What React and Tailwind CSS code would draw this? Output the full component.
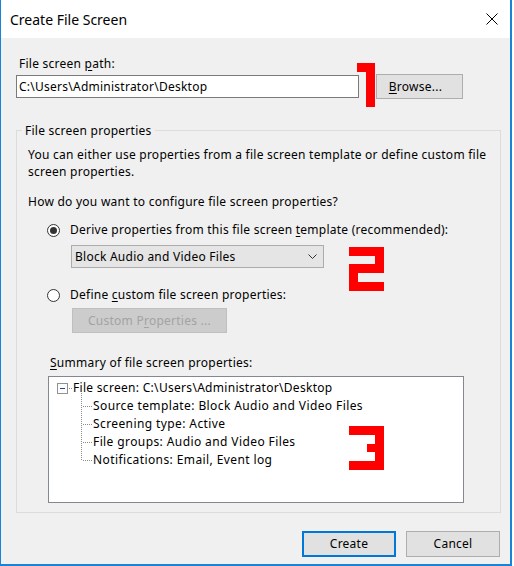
import React from 'react';

const Radio = ({ checked }) => (
  <span className="mt-[3px] flex h-[13px] w-[13px] shrink-0 items-center justify-center rounded-full border border-[#333333] bg-white">
    {checked && <span className="h-[7px] w-[7px] rounded-full bg-[#333333]" />}
  </span>
);

const Branch = ({ first, last }) => (
  <svg width="18" height="18" className="shrink-0 overflow-visible">
    <line x1="6.5" y1={first ? -4 : 0} x2="6.5" y2={last ? 10 : 18} stroke="#8c8c8c" strokeDasharray="1 1" />
    <line x1="8" y1="9.5" x2="17" y2="9.5" stroke="#8c8c8c" strokeDasharray="1 1" />
  </svg>
);

// red annotation digits drawn over the dialog
const Mark = ({ left, top, w, rects }) => (
  <svg className="absolute" style={{ left, top }} width={w} height="44">
    {rects.map(([x, y, rw, rh], i) => (
      <rect key={i} x={x} y={y} width={rw} height={rh} fill="#ff0000" />
    ))}
  </svg>
);

const children = [
  'Source template: Block Audio and Video Files',
  'Screening type: Active',
  'File groups: Audio and Video Files',
  'Notifications: Email, Event log',
];

export default function App() {
  return (
    <div className="relative h-[566px] w-[514px] bg-white font-['Noto_Sans',sans-serif] text-[12px] leading-[17px] tracking-[0.25px] text-black">
      <div className="flex h-[566px] w-[512px] flex-col border-b-2 border-l border-r-2 border-[#1883d7] bg-[#f0f0f0]">
        {/* title bar */}
        <div className="flex h-[38px] shrink-0 justify-between bg-white pl-[9px] pr-[12px] pt-[10px]">
          <span className="text-[14px] leading-[20px] tracking-normal">Create File Screen</span>
          <svg width="12" height="12" className="mt-[3px]">
            <path d="M0.5 0.5 L11.5 11.5 M11.5 0.5 L0.5 11.5" stroke="#000" strokeWidth="1" />
          </svg>
        </div>

        <div className="flex flex-col pl-[15px] pr-[10px] pt-[17px]">
          <div className="pl-[3px]">
            File screen <u className="underline-offset-2">p</u>ath:
          </div>
          <div className="mt-[2px] flex items-start">
            <div className="mt-[1px] h-[23px] w-[343px] border border-[#7a7a7a] bg-white pl-[2px] leading-[21px]">
              C:\Users\Administrator\Desktop
            </div>
            <button className="ml-[17px] h-[25px] w-[87px] border border-[#adadad] bg-[#e1e1e1] pr-[8px] leading-[23px]">
              <u className="underline-offset-2">B</u>rowse...
            </button>
          </div>

          <fieldset className="mt-[23px] w-[485px] border border-[#dcdcdc]">
            <legend className="ml-[5px] px-[3px] leading-[17px]">File screen properties</legend>
            <div className="flex flex-col pb-[9px] pt-[7px]">
              <p className="pl-[11px] pr-[8px]">
                You can either use properties from a file screen template or define custom file screen properties.
              </p>
              <div className="mt-[13px] pl-[11px]">How do you want to configure file screen properties?</div>

              <div className="mt-[11px] flex items-start gap-[10px] pl-[30px]">
                <Radio checked />
                <span>
                  Derive properties from this file screen <u className="underline-offset-2">t</u>emplate (recommended):
                </span>
              </div>
              <div className="ml-[54px] mt-[7px] flex h-[23px] w-[253px] items-center justify-between border border-[#acacac] bg-[#e5e5e5] pl-[3px] pr-[6px] leading-[21px]">
                <span>Block Audio and Video Files</span>
                <svg width="9" height="6">
                  <path d="M0.5 0.5 L4.5 4.5 L8.5 0.5" fill="none" stroke="#333" strokeWidth="1" />
                </svg>
              </div>

              <div className="mt-[18px] flex items-start gap-[10px] pl-[30px]">
                <Radio />
                <span>
                  Define <u className="underline-offset-2">c</u>ustom file screen properties:
                </span>
              </div>
              <button className="ml-[55px] mt-[5px] h-[25px] w-[155px] border border-[#bfbfbf] bg-[#cccccc] leading-[23px] text-[#a3a3a3]">
                Custom P<u className="underline-offset-2">r</u>operties ...
              </button>

              <div className="ml-[33px] mt-[21px]">
                <u className="underline-offset-2">S</u>ummary of file screen properties:
              </div>
              <div className="ml-[31px] mt-[5px] h-[127px] w-[416px] border border-[#828790] bg-white pt-[2px] leading-[18px] tracking-[0.4px]">
                <div className="flex h-[18px] items-start pl-[8px]">
                  <svg width="16" height="11" className="mt-[4px] shrink-0">
                    <rect x="0.5" y="0.5" width="10" height="10" fill="#fcfcfc" stroke="#919191" />
                    <line x1="3" y1="5.5" x2="8" y2="5.5" stroke="#1e4a86" />
                    <line x1="12" y1="5.5" x2="16" y2="5.5" stroke="#8c8c8c" strokeDasharray="1 1" />
                  </svg>
                  <span className="tracking-[0.3px]">File screen: C:\Users\Administrator\Desktop</span>
                </div>
                {children.map((t, i) => (
                  <div key={t} className="flex h-[18px] items-start pl-[26px]">
                    <Branch first={i === 0} last={i === children.length - 1} />
                    <span>{t}</span>
                  </div>
                ))}
              </div>
            </div>
          </fieldset>

          <div className="mt-[18px] flex justify-end gap-[10px]">
            <button className="h-[26px] w-[94px] border-2 border-[#0078d7] bg-[#e1e1e1] leading-[22px]">Create</button>
            <button className="h-[26px] w-[94px] border border-[#adadad] bg-[#e1e1e1] leading-[24px]">Cancel</button>
          </div>
        </div>
      </div>

      <Mark left={357} top={63} w={18} rects={[[0, 0, 18, 9], [9, 0, 9, 44]]} />
      <Mark
        left={349}
        top={247}
        w={35}
        rects={[[0, 0, 35, 9], [26, 0, 9, 26], [0, 17, 35, 9], [0, 17, 9, 27], [0, 35, 35, 9]]}
      />
      <Mark
        left={349}
        top={426}
        w={35}
        rects={[[0, 0, 35, 9], [26, 0, 9, 44], [18, 18, 17, 8], [0, 35, 35, 9]]}
      />
    </div>
  );
}
